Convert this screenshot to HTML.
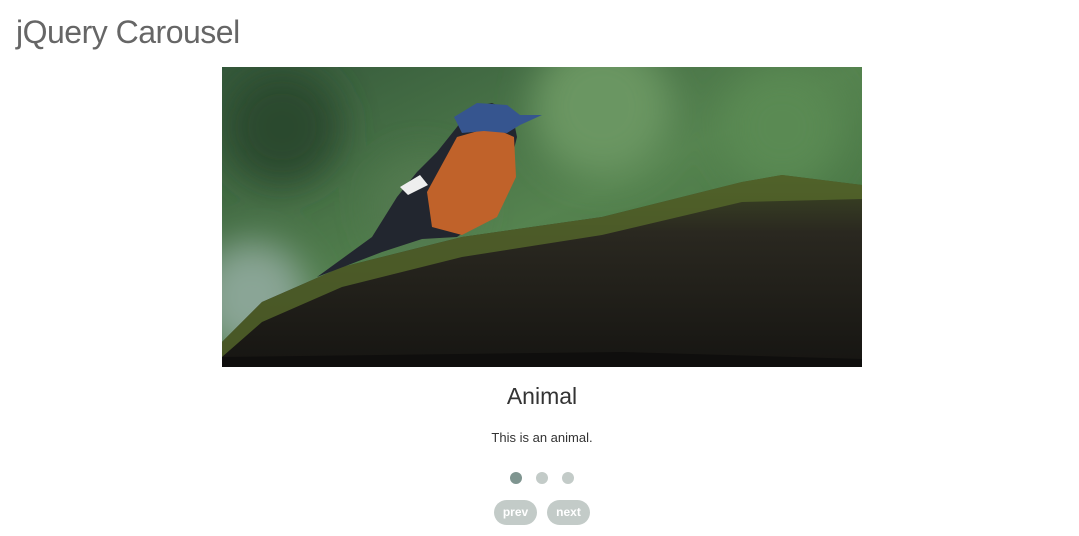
<!DOCTYPE html>
<html><head><meta charset="utf-8"><style>
html,body{margin:0;padding:0;background:#fff;width:1079px;height:536px;overflow:hidden;font-family:"Liberation Sans",Arial,sans-serif}
h1{position:absolute;left:16px;top:14px;margin:0;font-size:32px;font-weight:normal;color:#666;letter-spacing:-0.5px}
.img{position:absolute;left:222px;top:67px;width:640px;height:300px}
.t{position:absolute;left:0;width:1084px;text-align:center;top:383px;font-size:23px;color:#333}
.d{position:absolute;left:0;width:1084px;text-align:center;top:430px;font-size:13px;color:#333}
.dot{position:absolute;top:472px;width:12px;height:12px;border-radius:50%;background:#c3cbc8}
.btn{position:absolute;top:500px;height:25px;width:43px;border-radius:13px;background:#c3cbc8;color:#fff;font-weight:bold;font-size:12px;line-height:25px;text-align:center}
</style></head><body>
<h1>jQuery Carousel</h1>
<svg class="img" viewBox="0 0 640 300" preserveAspectRatio="none">
<defs>
<linearGradient id="bg" x1="0" y1="0" x2="1" y2="1">
<stop offset="0" stop-color="#34583a"/><stop offset="0.5" stop-color="#55834f"/><stop offset="1" stop-color="#3d6b3c"/></linearGradient>
<filter id="bl"><feGaussianBlur stdDeviation="18"/></filter>
<linearGradient id="log" x1="0" y1="0" x2="0" y2="1"><stop offset="0" stop-color="#3e4a24"/><stop offset="0.3" stop-color="#2a2820"/><stop offset="1" stop-color="#161512"/></linearGradient>
</defs>
<rect width="640" height="300" fill="url(#bg)"/>
<g filter="url(#bl)">
<circle cx="60" cy="60" r="60" fill="#2a4a2e"/>
<circle cx="380" cy="40" r="70" fill="#6a9662"/>
<circle cx="560" cy="60" r="60" fill="#5a8a52"/>
<circle cx="30" cy="230" r="55" fill="#8aa596"/>
<circle cx="200" cy="140" r="50" fill="#52794f"/>
</g>
<path d="M0 275 L40 235 L120 200 L240 170 L380 150 L520 115 L560 108 L640 118 L640 300 L0 300 Z" fill="url(#log)"/>
<path d="M0 275 L40 235 L120 200 L240 170 L380 150 L520 115 L560 108 L640 118 L640 132 L520 135 L380 168 L240 190 L120 220 L40 255 L0 290Z" fill="#55682a" opacity="0.8"/>
<path d="M0 300 L640 300 L640 292 L400 285 L0 290Z" fill="#0f0e0d"/>
<path d="M95 210 L150 170 L175 130 L195 105 L215 85 L235 60 L250 40 L270 36 L290 45 L295 70 L285 110 L265 150 L235 170 L200 172 L160 185 Z" fill="#22262f"/>
<path d="M205 125 L235 70 L270 60 L292 70 L294 110 L275 150 L240 168 L210 160 Z" fill="#c0622a"/>
<path d="M232 50 L255 36 L285 38 L298 48 L320 48 L298 58 L285 66 L262 64 L240 66 Z" fill="#36558f"/>
<path d="M178 120 L198 108 L206 118 L186 128Z" fill="#eee"/>
</svg>
<div class="t">Animal</div>
<div class="d">This is an animal.</div>
<div class="dot" style="left:510px;background:#7f9590"></div>
<div class="dot" style="left:536px"></div>
<div class="dot" style="left:562px"></div>
<div class="btn" style="left:494px">prev</div>
<div class="btn" style="left:547px">next</div>
</body></html>
